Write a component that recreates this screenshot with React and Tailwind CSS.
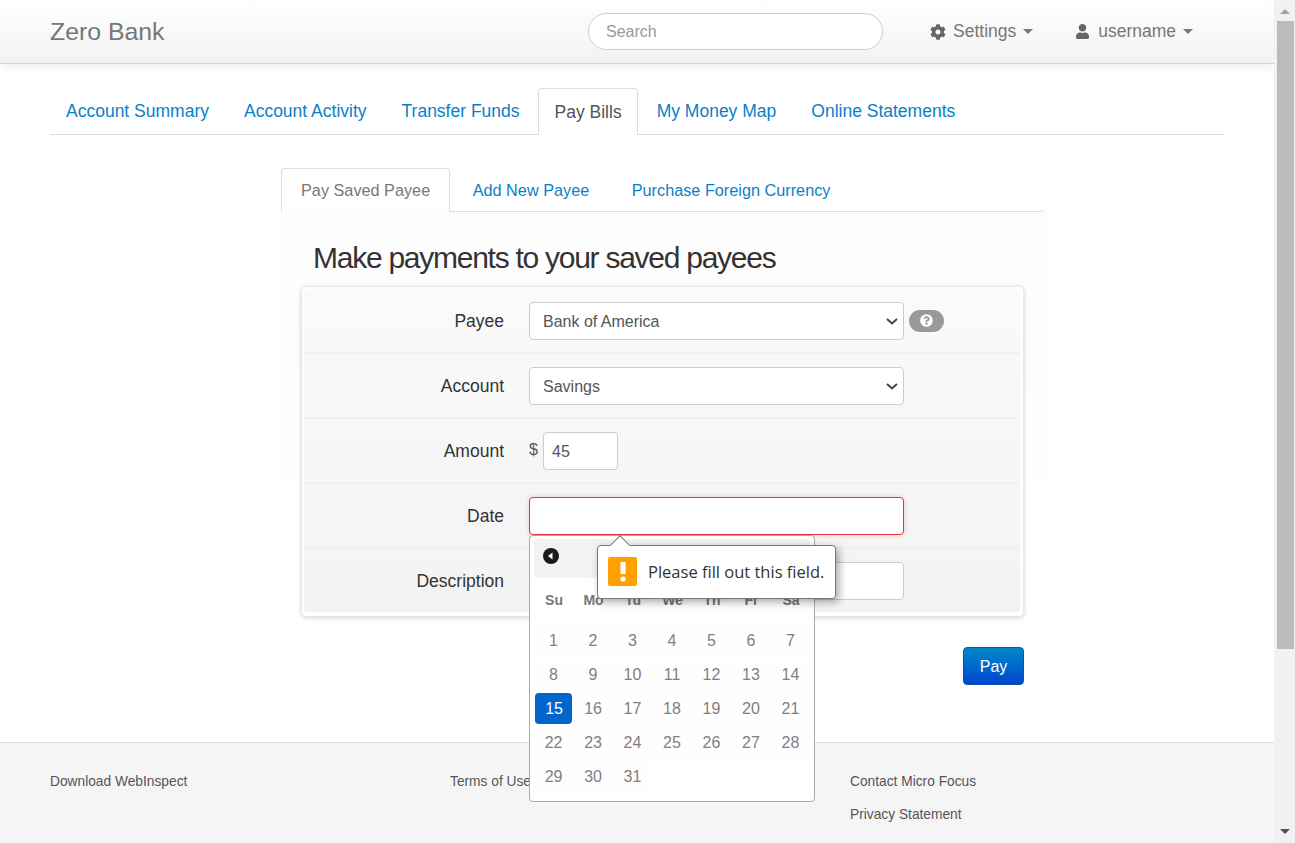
import { FaCog, FaUser, FaQuestionCircle } from "react-icons/fa";

const mainTabs = [
  "Account Summary",
  "Account Activity",
  "Transfer Funds",
  "Pay Bills",
  "My Money Map",
  "Online Statements",
];

const payTabs = ["Pay Saved Payee", "Add New Payee", "Purchase Foreign Currency"];

const dayNames = ["Su", "Mo", "Tu", "We", "Th", "Fr", "Sa"];

const days = Array.from({ length: 31 }, (_, i) => i + 1);

const inputClass =
  "h-[38px] rounded-[4px] border border-[#ccc] bg-white pt-[2px] text-[16px] text-[#555] outline-none";

const Caret = () => (
  <span className="ml-[7px] inline-block h-0 w-0 border-x-[5px] border-t-[5px] border-x-transparent border-t-[#777]" />
);

const Row = ({ label, last, children }) => (
  <div
    className={`flex items-center ${
      last ? "h-[63px]" : "h-[65px] border-b-2 border-[#f0f0f0]"
    }`}
  >
    <label className="w-[200px] pt-[2px] text-right text-[17.5px] text-[#333]">{label}</label>
    <div className="ml-[25px] flex items-center">{children}</div>
  </div>
);

const SelectBox = ({ defaultValue, options }) => (
  <div className="relative">
    <select
      className={`${inputClass} block w-[375px] appearance-none pl-[13px]`}
      defaultValue={defaultValue}
    >
      {options.map((option) => (
        <option key={option} value={option}>
          {option}
        </option>
      ))}
    </select>
    <svg
      width="12"
      height="7"
      viewBox="0 0 12 7"
      className="pointer-events-none absolute right-[6px] top-[16px]"
    >
      <path d="M1 1 L6 5.5 L11 1" fill="none" stroke="#444" strokeWidth="2" />
    </svg>
  </div>
);

const DatePicker = () => (
  <div className="absolute left-0 top-[38px] z-10 w-[286px] rounded-[4px] border border-[#aaa] bg-white pb-[9px]">
    <div className="mx-[4px] mt-[3px] flex h-[39px] items-center rounded-[4px] bg-[#f2f2f2] pl-[9px]">
      <svg width="16" height="16" viewBox="0 0 16 16" className="-mt-[5px]">
        <circle cx="8" cy="8" r="8" fill="#1a1a1a" />
        <path d="M5 8 L9.5 4.5 V11.5 Z" fill="#fff" />
      </svg>
    </div>
    <div className="grid h-[44px] grid-cols-7 items-center gap-x-[2.4px] px-[5px] pt-[2px]">
      {dayNames.map((name) => (
        <span key={name} className="pl-[1px] text-center text-[14px] font-bold text-[#777]">
          {name}
        </span>
      ))}
    </div>
    <div className="mt-[3px] grid grid-cols-7 gap-x-[2.4px] gap-y-[3px] px-[5px]">
      {days.map((day) => (
        <span
          key={day}
          className={
            day === 15
              ? "flex h-[31px] items-center justify-center rounded-[4px] bg-[#0066cc] pl-[1px] pt-[1px] text-[16px] text-white"
              : "flex h-[31px] items-center justify-center border-b border-r border-[#fbfbfb] bg-[#fefefe] pl-[1px] pt-[3px] text-[16px] text-[#808080]"
          }
        >
          {day}
        </span>
      ))}
    </div>
  </div>
);

const FieldTooltip = () => (
  <div className="absolute left-[68px] top-[48px] z-20 flex h-[54px] w-[239px] items-center rounded-[4px] border border-[#777] bg-white pl-[10px] shadow-[3px_3px_8px_rgba(0,0,0,0.35)]">
    <span className="absolute -top-[8px] left-[15px] h-[14px] w-[14px] rotate-45 border-l border-t border-[#777] bg-white" />
    <span className="relative flex h-[29px] w-[29px] items-center justify-center rounded-[2px] bg-[#ffa000]">
      <svg width="6" height="20" viewBox="0 0 6 20">
        <rect x="0.5" y="0" width="5" height="12" rx="0.5" fill="#fff" />
        <circle cx="3" cy="17" r="2.6" fill="#fff" />
      </svg>
    </span>
    <span className="relative ml-[11px] mt-[2px] whitespace-nowrap font-['Open_Sans',sans-serif] text-[16.5px] text-[#333]">
      Please fill out this field.
    </span>
  </div>
);

const App = () => {
  return (
    <div className="flex h-[843px] overflow-hidden bg-white font-['Liberation_Sans',Arial,sans-serif]">
      <div className="flex w-[1274px] flex-col">
        <header className="flex h-[64px] shrink-0 items-center border-b border-[#d4d4d4] bg-gradient-to-b from-white to-[#f2f2f2] shadow-[0_3px_9px_rgba(0,0,0,0.07)]">
          <a className="ml-[50px] w-[115px] whitespace-nowrap text-[24.8px] text-[#777]">Zero Bank</a>
          <input
            placeholder="Search"
            className="ml-[423px] h-[37px] w-[295px] rounded-full border border-[#ccc] bg-white pl-[17px] text-[16px] outline-none placeholder:text-[#999]"
          />
          <div className="ml-[47px] flex items-center text-[17.5px] text-[#777]">
            <FaCog className="mr-[7px] text-[16px] text-[#666]" />
            Settings
            <Caret />
          </div>
          <div className="ml-[42px] flex items-center text-[17.5px] text-[#777]">
            <FaUser className="mr-[8px] text-[15px] text-[#666]" />
            username
            <Caret />
          </div>
        </header>

        <nav className="ml-[50px] mt-[24px] flex h-[47px] w-[1175px] shrink-0 gap-[3px] border-b border-[#ddd]">
          {mainTabs.map((tab) =>
            tab === "Pay Bills" ? (
              <a
                key={tab}
                className="-ml-[1px] flex h-[47px] items-center rounded-t-[4px] border border-b-0 border-[#ddd] bg-white pl-[16px] pr-[15px] text-[17.5px] text-[#555]"
              >
                {tab}
              </a>
            ) : (
              <a
                key={tab}
                className="flex h-[46px] items-center border border-transparent px-[15px] text-[17.5px] text-[#0a7fc7]"
              >
                {tab}
              </a>
            )
          )}
        </nav>

        <section className="ml-[277px] mt-[33px] w-[772px] shrink-0">
          <div className="mx-[4px] flex h-[44px] gap-[2.5px] rounded-br-[4px] border-b border-[#ddd]">
            {payTabs.map((tab) =>
              tab === "Pay Saved Payee" ? (
                <a
                  key={tab}
                  className="flex h-[44px] items-center rounded-t-[4px] border border-b-0 border-[#ddd] bg-white px-[19px] text-[16.25px] text-[#777]"
                >
                  {tab}
                </a>
              ) : (
                <a
                  key={tab}
                  className="flex h-[43px] items-center border border-transparent px-[19px] pt-[1px] text-[16.25px] text-[#0a7fc7]"
                >
                  {tab}
                </a>
              )
            )}
          </div>

          <div className="bg-gradient-to-b from-[#fdfdfd] to-white pl-[24px]">
            <h2 className="flex h-[74px] items-center pl-[12px] pt-[17px] text-[30px] tracking-[-1.26px] text-[#333]">
              Make payments to your saved payees
            </h2>
            <form className="w-[723px]">
              <div className="rounded-[5px] border border-[#e8e8e8] bg-white pb-[4px] pl-[2px] pr-[3px] pt-[2px] shadow-[0_1px_4px_rgba(0,0,0,0.18)]">
                <div className="rounded-[3px] bg-gradient-to-b from-[#fafafa] to-[#f3f3f3]">
                  <Row label="Payee">
                    <SelectBox defaultValue="Bank of America" options={["Bank of America", "Sprint"]} />
                    <span className="ml-[5px] flex h-[22px] w-[35px] items-center justify-center rounded-full bg-[#999]">
                      <FaQuestionCircle className="text-[13px] text-white" />
                    </span>
                  </Row>
                  <Row label="Account">
                    <SelectBox defaultValue="Savings" options={["Savings", "Checking"]} />
                  </Row>
                  <Row label="Amount">
                    <span className="-mt-[2px] mr-[6px] w-[8px] text-[16px] text-[#555]">$</span>
                    <input defaultValue="45" className={`${inputClass} w-[75px] pl-[8px]`} />
                  </Row>
                  <Row label="Date">
                    <div className="relative">
                      <input className="h-[38px] w-[375px] rounded-[4px] border border-[#e5343a] bg-white shadow-[0_0_5px_rgba(229,52,58,0.25)] outline-none" />
                      <DatePicker />
                      <FieldTooltip />
                    </div>
                  </Row>
                  <Row label="Description" last>
                    <input className={`${inputClass} w-[375px]`} />
                  </Row>
                </div>
              </div>
              <div className="mt-[30px] flex justify-end">
                <button
                  type="button"
                  className="h-[38px] w-[61px] rounded-[4px] border border-[#0550bb] bg-gradient-to-b from-[#0088cc] to-[#0044cc] pt-[1px] text-[16px] text-white"
                >
                  Pay
                </button>
              </div>
            </form>
          </div>
        </section>

        <footer className="mt-[57px] flex-1 border-t border-[#ddd] bg-[#f5f5f5] pl-[50px] pt-[29px] text-[13.75px] text-[#555]">
          <div className="grid grid-cols-[400px_400px_1fr]">
            <a>Download WebInspect</a>
            <a>Terms of Use</a>
            <div className="flex flex-col gap-[12px]">
              <a>Contact Micro Focus</a>
              <a>Privacy Statement</a>
            </div>
          </div>
        </footer>
      </div>

      {/* fake browser scrollbar */}
      <aside className="flex w-[21px] shrink-0 flex-col items-center bg-[#f1f1f1]">
        <span className="mt-[9px] h-0 w-0 border-x-[5px] border-b-[5px] border-x-transparent border-b-[#a3a3a3]" />
        <span className="ml-[1px] mt-[7px] h-[628px] w-[17px] bg-[#bbb]" />
        <span className="mt-[180px] h-0 w-0 border-x-[5px] border-t-[5px] border-x-transparent border-t-[#505050]" />
      </aside>
    </div>
  );
};

export default App;
